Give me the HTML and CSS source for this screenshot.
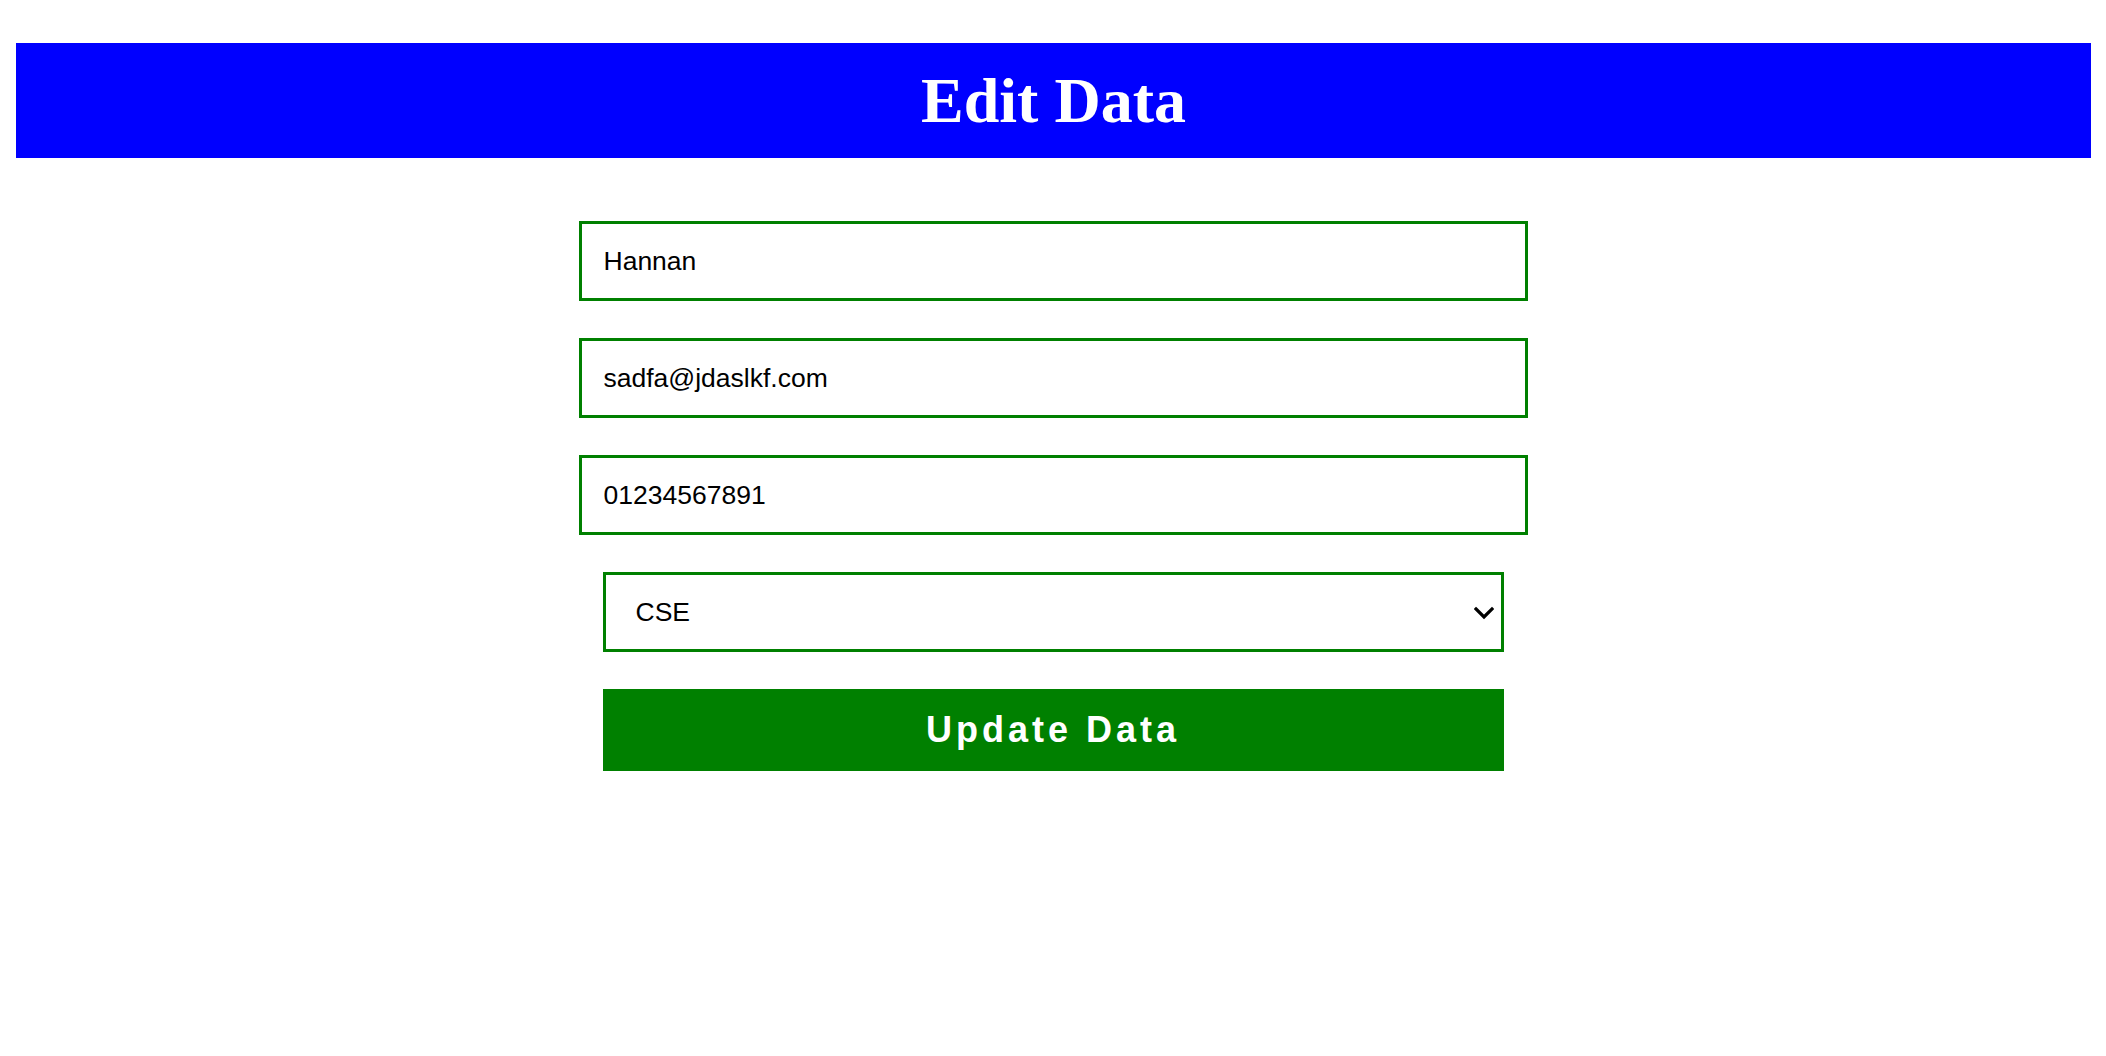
FILE: index.html
```html
<!DOCTYPE html>
<html>
<head>
<meta charset="utf-8">
<title>Edit Data</title>
<link rel="stylesheet" href="styles.css">
</head>
<body>
<header class="banner"><h1 class="banner-title">Edit Data</h1></header>
<form class="edit-form">
  <input class="field" type="text" value="Hannan">
  <input class="field" type="email" value="sadfa@jdaslkf.com">
  <input class="field" type="text" value="01234567891">
  <div class="select-wrap">
    <select class="field-select">
      <option selected>CSE</option>
      <option>EEE</option>
      <option>BBA</option>
    </select>
    <svg class="select-arrow" width="20" height="14" viewBox="0 0 20 14" aria-hidden="true">
      <path d="M2 3 L10 11 L18 3" fill="none" stroke="#000" stroke-width="3.2" stroke-linecap="square" stroke-linejoin="miter"/>
    </svg>
  </div>
  <button class="submit" type="button">Update Data</button>
</form>
</body>
</html>
```
FILE: styles.css
```css
html, body {
  margin: 0;
  padding: 0;
  background: #fff;
}
body {
  font-family: "Liberation Sans", Arial, sans-serif;
}
.banner {
  margin: 43px 15px 0 16px;
  height: 115px;
  background: #0000ff;
  display: flex;
  align-items: center;
  justify-content: center;
}
.banner-title {
  margin: 0;
  font-family: "Liberation Serif", "Times New Roman", serif;
  font-weight: bold;
  font-size: 64px;
  line-height: 1;
  color: #fff;
}
.edit-form {
  width: 949px;
  margin: 63px auto 0;
  display: flex;
  flex-direction: column;
  align-items: center;
  gap: 37px;
}
.field {
  box-sizing: border-box;
  width: 949px;
  height: 80px;
  border: 3px solid #008000;
  border-radius: 0;
  padding: 0 22px;
  font-family: "Liberation Sans", Arial, sans-serif;
  font-size: 26.5px;
  color: #000;
  background: #fff;
  outline: none;
}
.select-wrap {
  position: relative;
  width: 901px;
  height: 80px;
}
.field-select {
  box-sizing: border-box;
  width: 901px;
  height: 80px;
  border: 3px solid #008000;
  border-radius: 0;
  padding: 0 40px 0 30px;
  font-family: "Liberation Sans", Arial, sans-serif;
  font-size: 26.5px;
  color: #000;
  background: #fff;
  outline: none;
  -webkit-appearance: none;
  appearance: none;
}
.select-arrow {
  position: absolute;
  right: 10px;
  top: 34px;
  pointer-events: none;
}
.submit {
  box-sizing: border-box;
  width: 901px;
  height: 82px;
  border: none;
  border-radius: 0;
  background: #008000;
  color: #fff;
  font-family: "Liberation Sans", Arial, sans-serif;
  font-weight: bold;
  font-size: 36px;
  letter-spacing: 4px;
  cursor: pointer;
}
```
